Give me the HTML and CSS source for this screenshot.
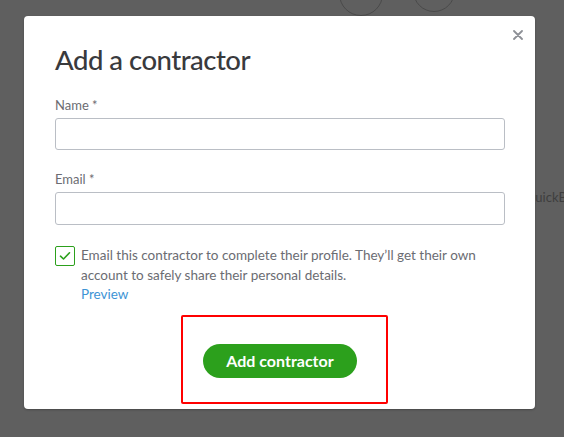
FILE: index.html
```html
<!DOCTYPE html>
<html lang="en">
<head>
<meta charset="utf-8">
<title>Add a contractor</title>
<link rel="stylesheet" href="styles.css">
</head>
<body>
<div class="backdrop">
  <div class="bg-circle bg-circle-one"></div>
  <div class="bg-circle bg-circle-two"></div>
  <div class="bg-text">QuickB</div>
</div>
<div class="modal">
  <button class="close" aria-label="Close">
    <svg width="10" height="10" viewBox="0 0 10 10"><path d="M1 1L9 9M9 1L1 9" stroke="#8d9096" stroke-width="1.8" stroke-linecap="round"/></svg>
  </button>
  <h1 class="title">Add a contractor</h1>
  <div class="field">
    <label class="label">Name *</label>
    <input class="input" type="text">
  </div>
  <div class="field">
    <label class="label">Email *</label>
    <input class="input" type="text">
  </div>
  <div class="check-row">
    <span class="checkbox">
      <svg width="12" height="10" viewBox="0 0 12 10"><path d="M1.5 5.2L4.5 8L10.5 1.8" fill="none" stroke="#2ca01c" stroke-width="1.6" stroke-linecap="round" stroke-linejoin="round"/></svg>
    </span>
    <div class="check-text">
      <p>Email this contractor to complete their profile. They’ll get their own account to safely share their personal details.</p>
      <a class="preview" href="#">Preview</a>
    </div>
  </div>
  <div class="footer">
    <button class="primary">Add contractor</button>
  </div>
  <div class="highlight"></div>
</div>
</body>
</html>
```
FILE: styles.css
```css
html, body {
  margin: 0;
  padding: 0;
}
body {
  width: 564px;
  height: 437px;
  background: #5f5f5f;
  font-family: "Lato", "Open Sans", sans-serif;
  overflow: hidden;
  position: relative;
}
.backdrop {
  position: absolute;
  inset: 0;
}
.bg-circle {
  position: absolute;
  border: 1.5px solid #4a4a4a;
  border-radius: 50%;
}
.bg-circle-one {
  left: 339px;
  top: -28px;
  width: 42px;
  height: 42px;
}
.bg-circle-two {
  left: 413px;
  top: -30px;
  width: 40px;
  height: 40px;
}
.bg-text {
  position: absolute;
  left: 525px;
  top: 189px;
  font-size: 13px;
  color: #3e3e3e;
  white-space: nowrap;
}
.modal {
  position: relative;
  margin: 16px 0 0 24px;
  width: 511px;
  height: 393px;
  box-sizing: border-box;
  background: #fff;
  border-radius: 4px;
  padding: 26px 30px 30px 31px;
  box-shadow: 0 1px 2px rgba(0,0,0,0.25);
}
.close {
  position: absolute;
  top: 11px;
  right: 9px;
  width: 16px;
  height: 16px;
  padding: 0;
  border: 0;
  background: none;
  display: flex;
  align-items: center;
  justify-content: center;
}
.title {
  margin: 0;
  font-size: 27.5px;
  line-height: 36px;
  font-weight: 500;
  letter-spacing: -0.5px;
  color: #393a3d;
}
.field {
  display: flex;
  flex-direction: column;
  margin-top: 18px;
}
.field + .field {
  margin-top: 20px;
}
.label {
  font-size: 13px;
  line-height: 18px;
  color: #6b6c72;
  margin-bottom: 4px;
}
.input {
  height: 32px;
  box-sizing: border-box;
  border: 1px solid #babec5;
  border-radius: 3px;
  margin: 0;
  padding: 0 8px;
}
.field + .field .input {
  height: 33px;
}
.check-row {
  display: flex;
  gap: 6px;
  margin-top: 21px;
}
.checkbox {
  flex: none;
  width: 20px;
  height: 20px;
  box-sizing: border-box;
  border: 1.5px solid #2ca01c;
  border-radius: 2px;
  margin-top: 0;
  display: flex;
  align-items: center;
  justify-content: center;
}
.check-text {
  font-size: 13.5px;
  line-height: 19.5px;
  color: #6b6c72;
}
.check-text p {
  margin: 0;
}
.preview {
  color: #3d94d5;
  text-decoration: none;
}
.footer {
  display: flex;
  justify-content: center;
  margin-top: 39px;
}
.primary {
  width: 154px;
  height: 34px;
  border: 0;
  border-radius: 17px;
  background: #2ca01c;
  color: #fff;
  font-family: inherit;
  font-size: 16px;
  font-weight: 700;
  padding: 0;
}
.highlight {
  position: absolute;
  left: 157px;
  top: 299px;
  width: 207px;
  height: 89px;
  box-sizing: border-box;
  border: 2px solid #ff0000;
  border-radius: 2px;
}
```
